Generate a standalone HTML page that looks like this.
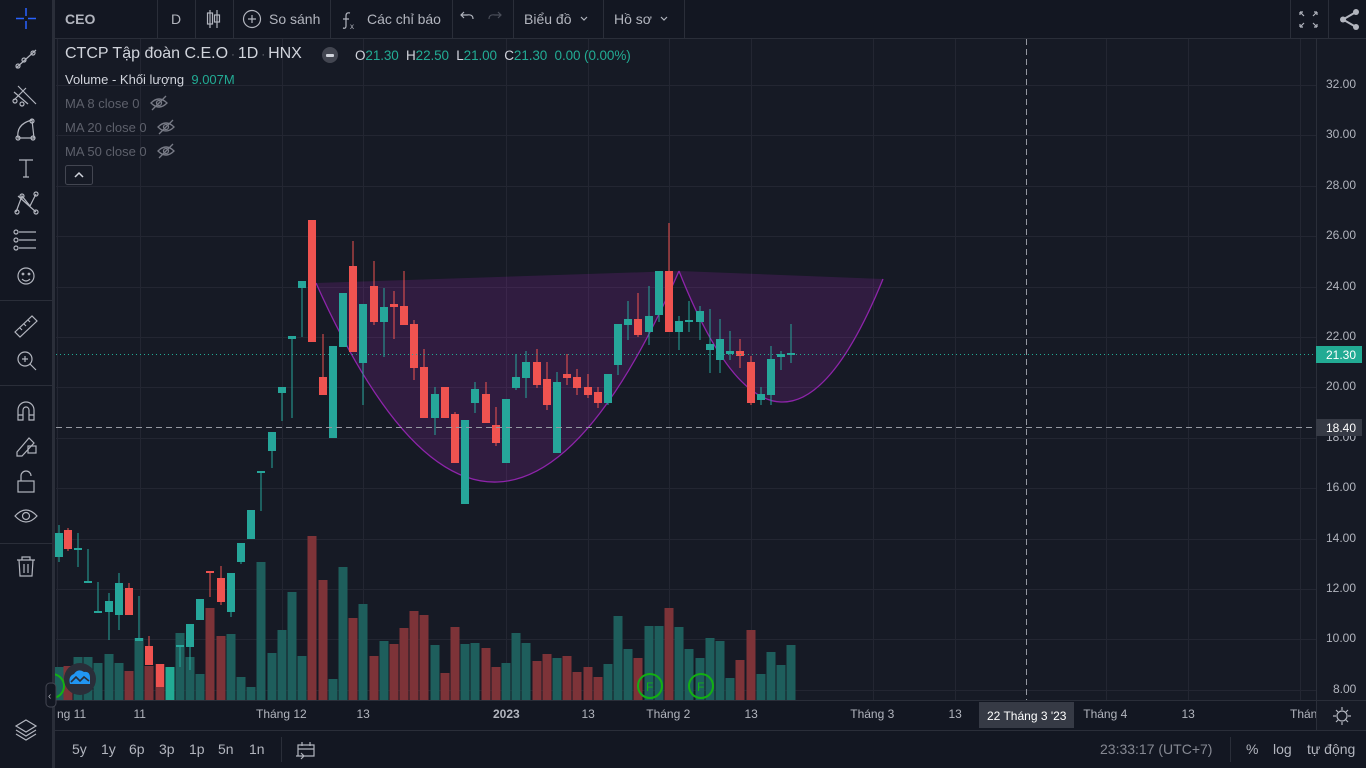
<!DOCTYPE html>
<html><head><meta charset="utf-8">
<style>
*{margin:0;padding:0;box-sizing:border-box}
body{width:1366px;height:768px;overflow:hidden;background:#131722;font-family:"Liberation Sans","Noto Sans CJK SC",sans-serif;position:relative;color:#d1d4dc}
.abs{position:absolute}
.t{position:absolute;white-space:nowrap}
</style></head><body>
<svg class="abs" style="left:0;top:0" width="1366" height="768" id="s">
<rect x="0" y="0" width="1366" height="768" fill="#131722"/>
<rect x="56" y="39" width="1260" height="661" fill="#161a25"/>
<rect x="1316" y="39" width="50" height="691" fill="#161a25"/>
<line x1="55" y1="38.5" x2="1366" y2="38.5" stroke="#2a2e39"/>
<line x1="55" y1="700.5" x2="1366" y2="700.5" stroke="#2a2e39"/>
<line x1="55" y1="730.5" x2="1366" y2="730.5" stroke="#2a2e39"/>
<line x1="1316.5" y1="39" x2="1316.5" y2="730" stroke="#2a2e39"/>
<g id="grid" stroke="#232632" stroke-width="1"></g>
<g id="cup"></g>
<g id="vol"></g>
<g id="cdl"></g>
<line x1="56" y1="354.5" x2="1316" y2="354.5" stroke="#22ab94" stroke-dasharray="1 3"/>
<line x1="56" y1="427.5" x2="1316" y2="427.5" stroke="#9598a1" stroke-dasharray="6 4"/>
<line x1="1026.5" y1="39" x2="1026.5" y2="700" stroke="#9598a1" stroke-dasharray="6 4"/>
<rect x="979" y="702" width="95" height="26" fill="#363a45"/>
<text x="987" y="720" font-size="12" fill="#fff" font-family="Liberation Sans">22 Tháng 3 '23</text>
<circle cx="52" cy="686" r="12" fill="none" stroke="#13b013" stroke-width="2"/>
<circle cx="650" cy="686" r="12" fill="none" stroke="#13b013" stroke-width="2"/>
<text x="646" y="691" font-size="12" fill="#13b013" font-family="Liberation Sans">F</text>
<circle cx="701" cy="686" r="12" fill="none" stroke="#13b013" stroke-width="2"/>
<text x="697" y="691" font-size="12" fill="#13b013" font-family="Liberation Sans">F</text>
<rect x="0" y="0" width="52" height="768" fill="#131722"/>
<rect x="52" y="0" width="3" height="768" fill="#2a2e39"/>
<circle cx="80" cy="679" r="16" fill="#2a2e39"/>
<path d="M70 684 Q68 676 74 674 Q78 668 84 672 Q90 671 90 678 L90 684 Z" fill="#2196f3"/>
<path d="M71 682 L76 677 L80 681 L84 677 L89 681" fill="none" stroke="#2a2e39" stroke-width="1.6"/>
<rect x="46" y="683" width="10" height="24" rx="4" fill="#131722" stroke="#434651"/>
<text x="48" y="699" font-size="10" fill="#b2b5be">‹</text>
<g stroke="#2a2e39">
<line x1="157.5" y1="0" x2="157.5" y2="38"/><line x1="195.5" y1="0" x2="195.5" y2="38"/><line x1="233.5" y1="0" x2="233.5" y2="38"/><line x1="330.5" y1="0" x2="330.5" y2="38"/><line x1="452.5" y1="0" x2="452.5" y2="38"/><line x1="513.5" y1="0" x2="513.5" y2="38"/><line x1="603.5" y1="0" x2="603.5" y2="38"/><line x1="684.5" y1="0" x2="684.5" y2="38"/><line x1="1290.5" y1="0" x2="1290.5" y2="38"/><line x1="1328.5" y1="0" x2="1328.5" y2="38"/>
<line x1="0" y1="300.5" x2="52" y2="300.5"/><line x1="0" y1="385.5" x2="52" y2="385.5"/><line x1="0" y1="543.5" x2="52" y2="543.5"/>
<line x1="281.5" y1="737" x2="281.5" y2="762"/><line x1="1230.5" y1="737" x2="1230.5" y2="762"/>
</g>
<g fill="none" stroke="#b2b5be" stroke-width="1.2">
<path d="M26 8v8M26 21v8M16 18.5h8M28 18.5h8" stroke="#2962ff" stroke-width="1.5"/>
<path d="M16 68 L36 50"/><circle cx="18" cy="66" r="2"/><circle cx="24" cy="60" r="2"/><circle cx="33" cy="53" r="2"/>
<path d="M14 92 L28 104M18 86 L36 104M14 100 L26 88"/><circle cx="15" cy="101" r="2"/><circle cx="22" cy="104" r="2"/>
<path d="M18 138 Q16 124 32 120 L34 138 Z"/><circle cx="18" cy="138" r="2"/><circle cx="32" cy="121" r="2"/><circle cx="33" cy="138" r="2"/>
<path d="M19 160h14M26 160v17M23 177h6"/>
<path d="M16 212 L22 196 L30 206 L36 194 M18 196 L36 212"/><circle cx="17" cy="212" r="2"/><circle cx="22" cy="196" r="2"/><circle cx="36" cy="194" r="2"/><circle cx="36" cy="212" r="2"/>
<path d="M19 232h17M19 240h17M19 248h17"/><circle cx="16" cy="232" r="2"/><circle cx="16" cy="240" r="2"/><circle cx="16" cy="248" r="2"/>
<circle cx="26" cy="276" r="8"/><circle cx="23" cy="274" r=".8"/><circle cx="29" cy="274" r=".8"/><path d="M22 279 Q26 283 30 279"/>
<path d="M15 332 L32 316 L37 321 L20 337 Z M20 328 l2 2 M24 324 l2 2 M28 320 l2 2"/>
<circle cx="25" cy="359" r="7"/><path d="M30 364 L36 370 M22 359h6M25 356v6"/>
<path d="M18 420 V410 A8 8 0 0 1 34 410 V420 H29 V410 A3 3 0 0 0 23 410 V420 Z M18 415h5M29 415h5"/>
<path d="M17 452 L29 438 L34 443 L22 456 L17 456 Z"/><rect x="28" y="446" width="8" height="7"/>
<rect x="18" y="481" width="16" height="11"/><path d="M21 481 V476 A5 5 0 0 1 31 476"/>
<path d="M15 516 Q26 504 37 516 Q26 528 15 516 Z"/><circle cx="26" cy="516" r="3.5"/>
<path d="M17 560h18M22 560v-3h8v3M19 560 L20 576 H32 L33 560 M24 564v9M28 564v9"/>
<path d="M26 720 L36 726 L26 732 L16 726 Z M16 730 L26 736 L36 730 M16 734 L26 740 L36 734"/>
</g>
<g fill="none" stroke="#b2b5be" stroke-width="1.2">
<path d="M210 10v18M217 10v18"/><rect x="207.5" y="13" width="5" height="11"/><rect x="214.5" y="15" width="5" height="7"/>
<circle cx="252" cy="19" r="8.5"/><path d="M248 19h8M252 15v8"/>
<path d="M473 19 Q473 14 467 15 h-6 M464 12 l-3 3 3 3"/>
<path d="M489 19 Q489 14 495 15 h6 M498 12 l3 3 -3 3" stroke="#4a4e59"/>
<path d="M581 17 l3 3 3 -3M661 17 l3 3 3 -3"/>
<path d="M1300 12 l4 4M1300 12h3M1300 12v3M1317 12 l-4 4M1317 12h-3M1317 12v3M1300 27 l4 -4M1300 27h3M1300 27v-3M1317 27 l-4 -4M1317 27h-3M1317 27v-3"/>
<circle cx="1342" cy="716" r="5"/><path d="M1342 707v3M1342 722v3M1333 716h3M1348 716h3M1336 710l2 2M1346 720l2 2M1348 710l-2 2M1336 722l2-2"/>
<path d="M298 745 h16 v11 h-16 Z M298 749h16 M302 742v4M310 742v4 M296 756 h8 M301 753 l3 3 -3 3"/>
</g>
<g fill="#b2b5be"><circle cx="1356" cy="12" r="3"/><circle cx="1356" cy="27" r="3"/><circle cx="1343" cy="19.5" r="3"/></g>
<path d="M1356 12 L1343 19.5 L1356 27" stroke="#b2b5be" stroke-width="2" fill="none"/>
<path d="M350 13 Q346 12 346 16 V26 Q346 29 343 28 M343 19h6" stroke="#b2b5be" fill="none" stroke-width="1.2"/>
<text x="350" y="29" font-size="8" fill="#b2b5be">x</text>
</svg>

<div class="t" style="left:65px;top:11px;font-size:14px;font-weight:bold;color:#b2b5be">CEO</div>
<div class="t" style="left:171px;top:11px;font-size:14px;color:#b2b5be">D</div>
<div class="t" style="left:269px;top:11px;font-size:14px;color:#b2b5be">So sánh</div>
<div class="t" style="left:367px;top:11px;font-size:14px;color:#b2b5be">Các chỉ báo</div>
<div class="t" style="left:524px;top:11px;font-size:14px;color:#b2b5be">Biểu đồ</div>
<div class="t" style="left:614px;top:11px;font-size:14px;color:#b2b5be">Hồ sơ</div>

<div class="t" style="left:65px;top:45px;font-size:16px;color:#d1d4dc">CTCP Tập đoàn C.E.O<span style="color:#787b86;font-size:11px"> · </span>1D<span style="color:#787b86;font-size:11px"> · </span>HNX</div>
<div class="abs" style="left:322px;top:47px;width:16px;height:16px;border-radius:50%;background:#434651"><div class="abs" style="left:4px;top:7px;width:8px;height:2.5px;background:#d1d4dc;border-radius:1px"></div></div>
<div class="t" style="left:355px;top:48px;font-size:13.5px;color:#d1d4dc;letter-spacing:-0.1px">O<span style="color:#22ab94">21.30</span>&nbsp;&nbsp;H<span style="color:#22ab94">22.50</span>&nbsp;&nbsp;L<span style="color:#22ab94">21.00</span>&nbsp;&nbsp;C<span style="color:#22ab94">21.30</span>&nbsp;&nbsp;<span style="color:#22ab94">0.00 (0.00%)</span></div>
<div class="t" style="left:65px;top:72px;font-size:13px;color:#d1d4dc">Volume - Khối lượng <span style="color:#22ab94">&nbsp;9.007M</span></div>
<div class="t" style="left:65px;top:96px;font-size:13px;color:#5d606b">MA 8 close 0</div>
<div class="t" style="left:65px;top:120px;font-size:13px;color:#5d606b">MA 20 close 0</div>
<div class="t" style="left:65px;top:144px;font-size:13px;color:#5d606b">MA 50 close 0</div>
<svg class="abs" style="left:0;top:0" width="200" height="200">
<g fill="none" stroke="#787b86" stroke-width="1.3">
<path d="M151 103 Q159 95 167 103 Q159 111 151 103 Z M152 110 L166 96"/><circle cx="159" cy="103" r="2.5"/>
<path d="M158 127 Q166 119 174 127 Q166 135 158 127 Z M159 134 L173 120"/><circle cx="166" cy="127" r="2.5"/>
<path d="M158 151 Q166 143 174 151 Q166 159 158 151 Z M159 158 L173 144"/><circle cx="166" cy="151" r="2.5"/>
</g>
<rect x="65.5" y="165.5" width="27" height="19" rx="2" fill="none" stroke="#434651"/>
<path d="M75 177 l4 -4 4 4" fill="none" stroke="#d1d4dc" stroke-width="1.5"/>
</svg>

<div id="labels"></div>
<div class="t" style="left:1316px;top:346px;width:46px;height:17px;background:#22ab94;color:#fff;font-size:12px;padding:2px 0 0 10px">21.30</div>
<div class="t" style="left:1316px;top:419px;width:46px;height:17px;background:#363a45;color:#fff;font-size:12px;padding:2px 0 0 10px">18.40</div>
<div class="t" style="left:72px;top:741px;font-size:14px;color:#b2b5be">5y</div>
<div class="t" style="left:101px;top:741px;font-size:14px;color:#b2b5be">1y</div>
<div class="t" style="left:129px;top:741px;font-size:14px;color:#b2b5be">6p</div>
<div class="t" style="left:159px;top:741px;font-size:14px;color:#b2b5be">3p</div>
<div class="t" style="left:189px;top:741px;font-size:14px;color:#b2b5be">1p</div>
<div class="t" style="left:218px;top:741px;font-size:14px;color:#b2b5be">5n</div>
<div class="t" style="left:249px;top:741px;font-size:14px;color:#b2b5be">1n</div>
<div class="t" style="left:1100px;top:741px;font-size:14px;color:#868993">23:33:17 (UTC+7)</div>
<div class="t" style="left:1246px;top:741px;font-size:14px;color:#b2b5be">%</div>
<div class="t" style="left:1273px;top:741px;font-size:14px;color:#b2b5be">log</div>
<div class="t" style="left:1307px;top:741px;font-size:14px;color:#b2b5be">tự động</div>

<script>
var NS="http://www.w3.org/2000/svg";
function el(p,tag,a){var e=document.createElementNS(NS,tag);for(var k in a)e.setAttribute(k,a[k]);p.appendChild(e);return e;}
var grid=document.getElementById('grid');
for(var i=0;i<13;i++){var y=Math.round(85+i*50.4)+.5;el(grid,'line',{x1:56,y1:y,x2:1316,y2:y});}
[57,140,282,363,506,588,669,751,873,955,1106,1188,1300].forEach(function(x){el(grid,'line',{x1:x+.5,y1:39,x2:x+.5,y2:700});});
var L=document.getElementById('labels'),h='';
var prices=['32.00','30.00','28.00','26.00','24.00','22.00','20.00','18.00','16.00','14.00','12.00','10.00','8.00'];
prices.forEach(function(p,i){var y=85+i*50.4-8;h+='<div class="t" style="left:'+(p=='8.00'?1333:1326)+'px;top:'+y+'px;font-size:12px;color:#b2b5be">'+p+'</div>';});
[[57,'ng 11'],[140,'11'],[282,'Tháng 12'],[363,'13'],[506,'2023',1],[588,'13'],[669,'Tháng 2'],[751,'13'],[873,'Tháng 3'],[955,'13'],[1106,'Tháng 4'],[1188,'13']].forEach(function(a){
 var w=a[1].length*6.5;var left=a[0]==57?57:a[0]-w/2;
 h+='<div class="t" style="left:'+left+'px;top:707px;font-size:12px;color:#b2b5be;'+(a[2]?'font-weight:bold;':'')+'">'+a[1]+'</div>';});
h+='<div class="t" style="left:1290px;top:707px;width:26px;overflow:hidden;font-size:12px;color:#b2b5be">Tháng</div>';
L.innerHTML=h;
var cup=document.getElementById('cup');
el(cup,'path',{d:'M316 283 L679 271 Q497 687 316 283 Z',fill:'rgba(156,39,176,0.2)'});
el(cup,'path',{d:'M316 283 Q497 687 679 271',fill:'none',stroke:'#8e24aa','stroke-width':1.3});
el(cup,'path',{d:'M679 271 L883 279 Q781 529 679 271 Z',fill:'rgba(156,39,176,0.2)'});
el(cup,'path',{d:'M679 271 Q781 529 883 279',fill:'none',stroke:'#8e24aa','stroke-width':1.3});
var D=[
[59,533,557,525,562,'g',667],[68,530,549,528,551,'r',666],[78,548,550,533,567,'g',657],[88,581,583,549,583,'g',657],
[98,611,613,582,613,'g',663],[109,601,612,593,640,'g',654],[119,583,615,573,630,'g',663],[129,588,615,583,615,'r',671],
[139,638,641,596,641,'g',638],[149,646,665,636,665,'r',666],[160,664,687,664,687,'r',664],[170,0,0,0,0,'b',667],
[180,645,647,645,667,'g',633],[190,624,647,624,670,'g',657],[200,599,620,599,620,'g',674],[210,571,573,571,597,'r',608],
[221,578,602,566,605,'r',636],[231,573,612,573,617,'g',634],[241,543,562,543,564,'g',677],[251,510,539,510,539,'g',687],
[261,471,473,472,511,'g',562],[272,432,451,432,468,'g',653],[282,387,393,387,421,'g',630],[292,336,339,336,418,'g',592],
[302,281,288,281,337,'g',656],[312,220,342,220,342,'r',536],[323,377,395,334,395,'r',580],[333,346,438,346,438,'g',679],
[343,293,347,293,347,'g',567],[353,266,352,241,352,'r',618],[363,304,363,304,405,'g',604],[374,286,322,261,325,'r',656],
[384,307,322,288,357,'g',641],[394,304,307,291,339,'r',644],[404,306,325,271,325,'r',628],[414,324,368,320,380,'r',611],
[424,367,418,349,418,'r',615],[435,394,418,387,435,'g',645],[445,387,418,387,418,'r',673],
[455,414,463,412,463,'r',627],[465,420,504,420,504,'g',644],[475,389,403,382,413,'g',643],[486,394,423,382,423,'r',648],
[496,425,443,407,446,'r',667],[506,399,463,399,463,'g',663],[516,377,388,354,390,'g',633],[526,362,378,351,398,'g',643],
[537,362,385,349,388,'r',661],[547,379,405,362,410,'r',654],[557,382,453,372,453,'g',658],[567,374,378,354,385,'r',656],
[577,377,388,369,395,'r',672],[588,387,395,374,398,'r',667],[598,392,403,387,408,'r',677],[608,374,403,374,405,'g',664],
[618,324,365,324,375,'g',616],[628,319,325,301,340,'g',649],[638,319,335,293,337,'r',658],[649,316,332,286,345,'g',626],
[659,271,315,271,322,'g',626],[669,271,332,223,332,'r',608],[679,321,332,316,350,'g',627],[689,320,322,301,332,'g',649],
[700,311,322,306,340,'g',658],[710,344,350,309,373,'g',638],[720,339,360,319,373,'g',641],[730,351,354,331,360,'g',678],
[740,351,356,339,368,'r',660],[751,362,403,356,405,'r',630],[761,394,400,387,405,'g',674],[771,359,395,346,405,'g',652],
[781,354,357,351,370,'g',665],[791,353,355,324,363,'g',645]];
var V=document.getElementById('vol'),C=document.getElementById('cdl');
D.forEach(function(d){
 var x=d[0],col=d[5];
 var vc=col=='r'?'#7d3338':(col=='b'?'#22ab94':'#1e5e5c');
 el(V,'rect',{x:x-4.5,y:d[6],width:9,height:700-d[6],fill:vc});
 if(col=='b')return;
 var cc=col=='g'?'#26a69a':'#ef5350';
 el(C,'rect',{x:x-0.5,y:d[3],width:1,height:d[4]-d[3],fill:cc});
 el(C,'rect',{x:x-4,y:d[1],width:8,height:Math.max(1.5,d[2]-d[1]),fill:cc});
});
</script>
</body></html>
